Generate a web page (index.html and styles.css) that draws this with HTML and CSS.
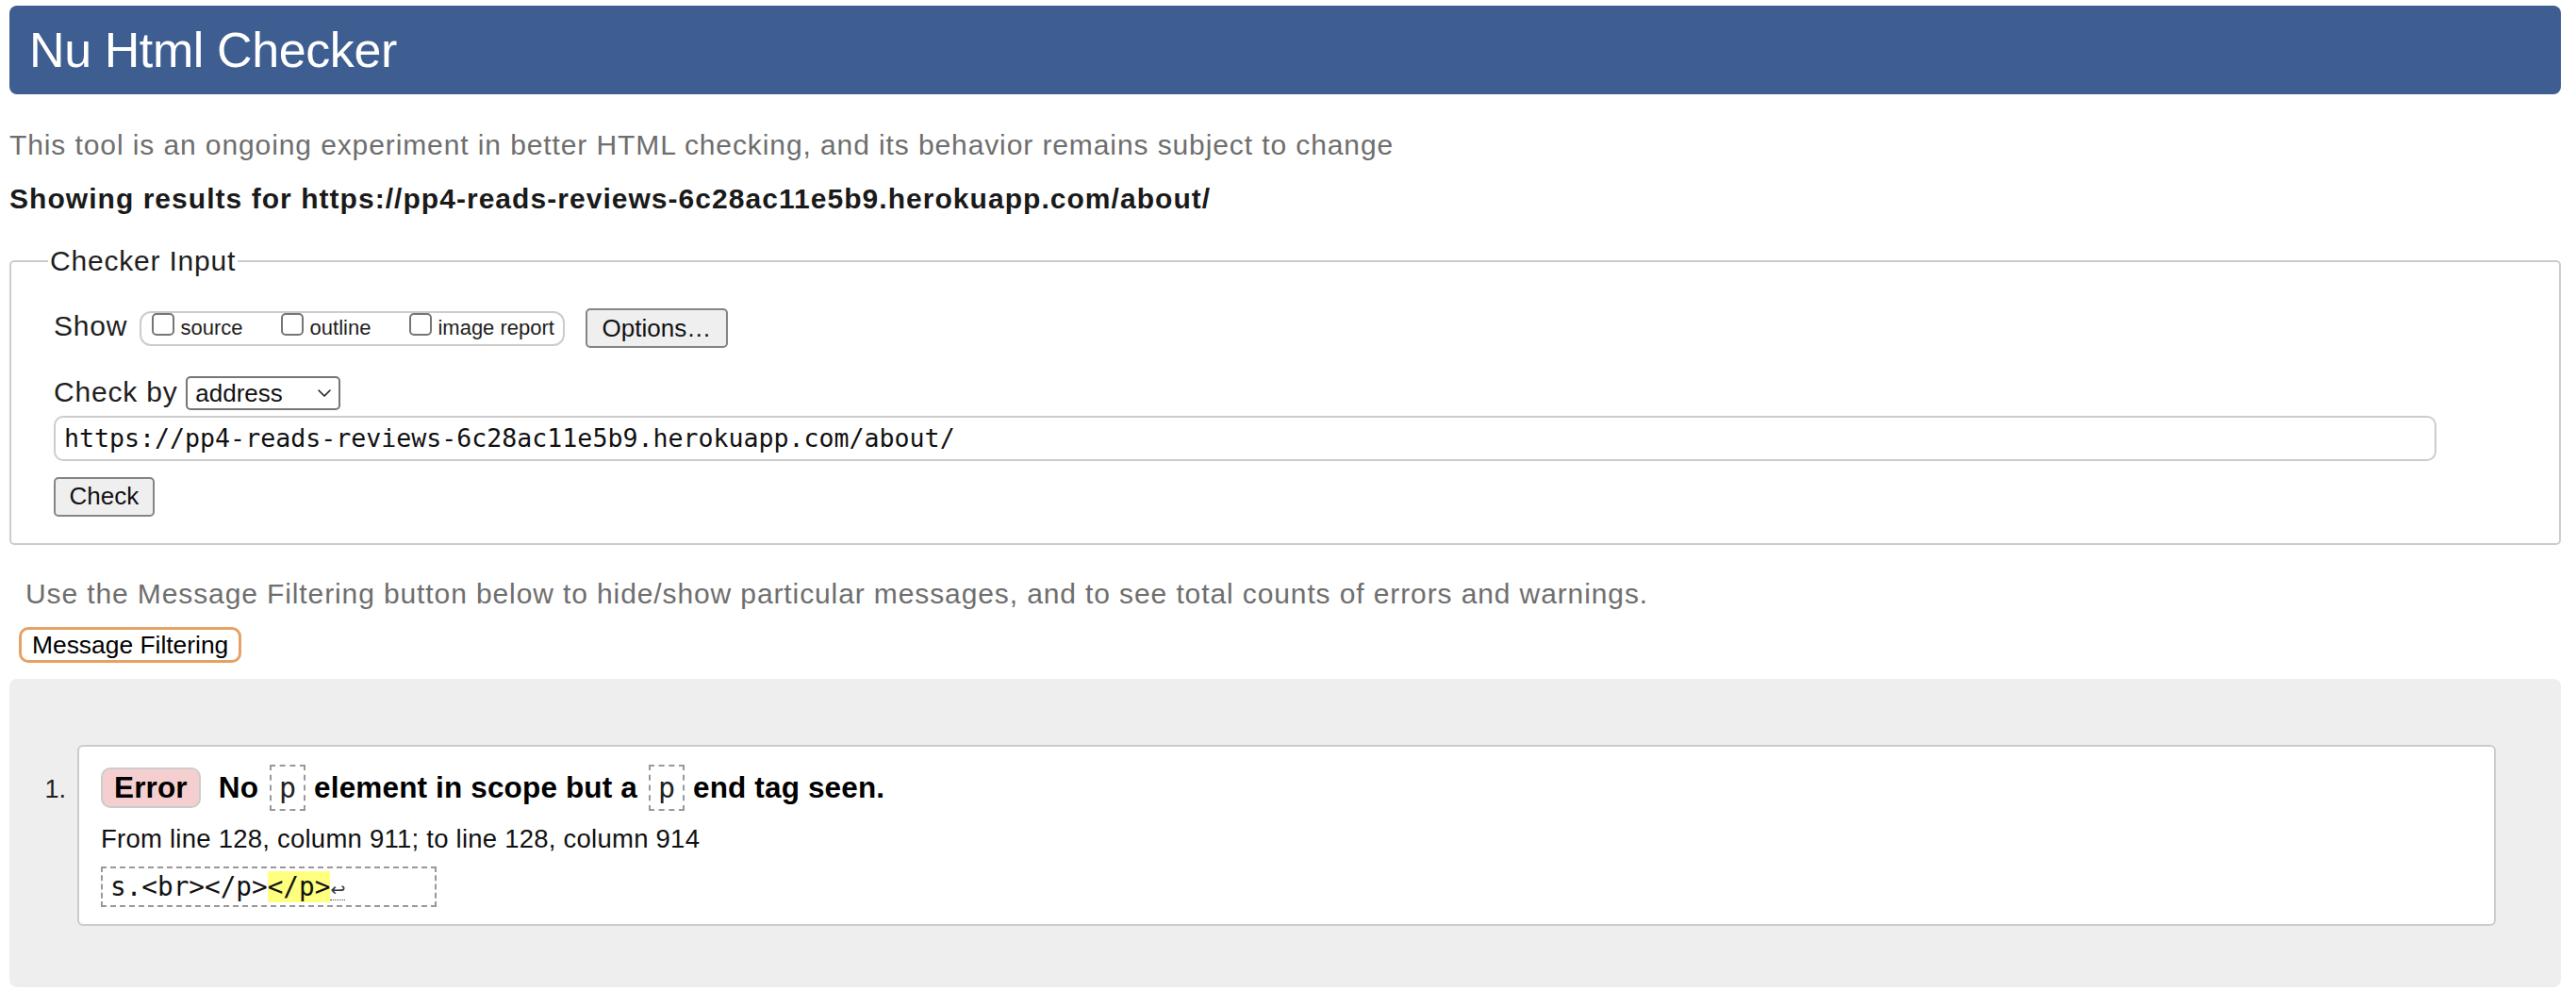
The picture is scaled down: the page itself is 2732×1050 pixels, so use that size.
FILE: index.html
```html
<!DOCTYPE html>
<html lang="en">
<head>
<meta charset="utf-8">
<title>Nu Html Checker</title>
<link rel="stylesheet" href="styles.css">
</head>
<body>
<header class="masthead"><h1 class="title">Nu Html Checker</h1></header>
<p class="intro">This tool is an ongoing experiment in better HTML checking, and its behavior remains subject to change</p>
<p class="results-for">Showing results for https://pp4-reads-reviews-6c28ac11e5b9.herokuapp.com/about/</p>
<form class="checker">
  <fieldset class="checker-input">
    <legend class="legend">Checker Input</legend>
    <div class="row row-show">
      <span class="label label-show">Show</span>
      <div class="show-group">
        <label class="opt"><input type="checkbox" class="cb"><span class="opt-text">source</span></label>
        <label class="opt"><input type="checkbox" class="cb"><span class="opt-text">outline</span></label>
        <label class="opt"><input type="checkbox" class="cb"><span class="opt-text">image report</span></label>
      </div>
      <button type="button" class="btn btn-options">Options…</button>
    </div>
    <div class="row row-checkby">
      <span class="label label-checkby">Check by</span>
      <div class="select"><span class="select-value">address</span><svg class="chevron" width="14" height="8" viewBox="0 0 14 8"><polyline points="1,1 7,7 13,1" fill="none" stroke="#222" stroke-width="1.6" stroke-linecap="round" stroke-linejoin="round"/></svg></div>
    </div>
    <div class="url-field">https://pp4-reads-reviews-6c28ac11e5b9.herokuapp.com/about/</div>
    <div class="row row-check">
      <button type="button" class="btn btn-check">Check</button>
    </div>
  </fieldset>
</form>
<p class="filter-note">Use the Message Filtering button below to hide/show particular messages, and to see total counts of errors and warnings.</p>
<button type="button" class="btn-filter">Message Filtering</button>
<section class="results">
  <ol class="messages">
    <li class="message-item">
      <span class="num">1.</span>
      <div class="card">
        <p class="msg-line"><span class="badge">Error</span>No <code class="tag">p</code> element in scope but a <code class="tag">p</code> end tag seen.</p>
        <p class="location">From line 128, column 911; to line 128, column 914</p>
        <div class="extract"><code class="extract-code">s.&lt;br&gt;&lt;/p&gt;<mark class="hl">&lt;/p&gt;</mark><span class="lf">↩</span></code></div>
      </div>
    </li>
  </ol>
</section>
</body>
</html>
```
FILE: styles.css
```css
* { box-sizing: border-box; }

html, body { margin: 0; }

body {
  background: #fff;
  color: #222;
  font-family: "Liberation Sans", Arial, Helvetica, sans-serif;
  padding: 6px 16px 0 10px;
}

.masthead {
  height: 94px;
  background: #3e5e92;
  border-radius: 8px;
  display: flex;
  align-items: center;
  padding-left: 21px;
}

.title {
  margin: 0;
  color: #fff;
  font-size: 52px;
  font-weight: normal;
  letter-spacing: -0.4px;
  line-height: 60px;
}

.intro {
  margin: 36.6px 0 0;
  font-size: 30px;
  line-height: 34px;
  letter-spacing: 0.9px;
  color: #6e6e6e;
}

.results-for {
  margin: 23.7px 0 0;
  font-size: 30px;
  line-height: 34px;
  letter-spacing: 1.04px;
  font-weight: bold;
  color: #1a1a1a;
}

.checker { margin: 0; }

.checker-input {
  margin: 31.3px 0 0;
  min-width: 0;
  border: 2px solid #ccc;
  border-radius: 5px;
  padding: 0 130px 28px 45px;
}

.legend {
  font-size: 30px;
  line-height: 34px;
  letter-spacing: 0.8px;
  padding: 0 2px;
  margin-left: -6px;
  color: #1e1e1e;
}

.row { display: flex; }

.label {
  font-size: 30px;
  line-height: 34px;
  letter-spacing: 0.8px;
  color: #1e1e1e;
}

.row-show {
  align-items: center;
  height: 42px;
  margin-top: 33.7px;
}

.label-show {
  margin-right: 12.3px;
  margin-bottom: 4px;
}

.show-group {
  display: flex;
  align-items: flex-start;
  height: 37px;
  border: 2px solid #ccc;
  border-radius: 12px;
  padding: 0 9.5px 0 11.5px;
  gap: 40.5px;
  margin-right: 21.6px;
}

.opt {
  display: flex;
  align-items: flex-start;
  gap: 6.5px;
}

.cb {
  -webkit-appearance: none;
  appearance: none;
  width: 24px;
  height: 24px;
  margin: 0;
  border: 2px solid #767676;
  border-radius: 5px;
  background: #fff;
}

.opt-text {
  font-size: 22px;
  line-height: 24px;
  padding-top: 4px;
  color: #1e1e1e;
}

.btn {
  font-family: "Liberation Sans", Arial, Helvetica, sans-serif;
  font-size: 26px;
  color: #111;
  background: #efefef;
  border: 2px solid #858585;
  border-radius: 5px;
  height: 42px;
  margin: 0;
}

.btn-options { padding: 0 15.5px; }

.row-checkby {
  align-items: baseline;
  margin-top: 29.5px;
}

.label-checkby { margin-right: 8.8px; }

.select {
  display: inline-flex;
  align-items: center;
  justify-content: space-between;
  width: 163.5px;
  height: 36px;
  border: 2px solid #767676;
  border-radius: 5px;
  padding: 0 8px;
  font-size: 26px;
  line-height: 30px;
  color: #111;
  background: #fff;
}

.chevron { display: block; }

.url-field {
  margin-top: 6px;
  height: 48px;
  border: 2px solid #ccc;
  border-radius: 10px;
  padding: 0 9px;
  display: flex;
  align-items: center;
  font-family: "DejaVu Sans Mono", Menlo, monospace;
  font-size: 26.6px;
  color: #111;
  white-space: nowrap;
}

.row-check { margin-top: 17px; }

.btn-check { padding: 0 14.6px; }

.filter-note {
  margin: 35.3px 0 0 17px;
  font-size: 30px;
  line-height: 34px;
  letter-spacing: 0.89px;
  color: #6e6e6e;
}

.btn-filter {
  display: block;
  margin: 18.4px 0 0 10px;
  height: 37.6px;
  padding: 0 11px;
  border: 3px solid #e6a264;
  border-radius: 10px;
  background: #fff;
  font-family: "Liberation Sans", Arial, Helvetica, sans-serif;
  font-size: 26.4px;
  color: #000;
}

.results {
  margin-top: 16.7px;
  background: #eee;
  border-radius: 8px;
  padding: 70px 69px 65px 37.6px;
}

.messages {
  list-style: none;
  margin: 0;
  padding: 0;
}

.message-item {
  display: flex;
  align-items: baseline;
}

.num {
  flex: none;
  width: 34.4px;
  font-size: 27px;
  color: #1e1e1e;
}

.card {
  flex: 1;
  background: #fff;
  border: 2px solid #ccc;
  border-radius: 6px;
  padding: 18.8px 20px 17.7px 23px;
}

.msg-line {
  margin: 0;
  font-weight: bold;
  font-size: 31.5px;
  line-height: 36px;
  letter-spacing: 0.15px;
  color: #000;
}

.badge {
  display: inline-block;
  background: #f5cfcf;
  border: 2px solid #ccc;
  border-radius: 10px;
  padding: 0 12px;
  line-height: 39px;
  margin-right: 19px;
}

.tag {
  display: inline-block;
  font-family: "DejaVu Sans Mono", Menlo, monospace;
  font-weight: normal;
  font-size: 30px;
  line-height: 45px;
  padding: 0 8px;
  border: 2px dashed #999;
  margin-left: 3px;
  color: #222;
}

.location {
  margin: 13.4px 0 0;
  font-size: 27.5px;
  line-height: 34px;
  letter-spacing: 0.24px;
  color: #111;
}

.extract {
  margin-top: 11.8px;
  width: 356.5px;
  height: 43.3px;
  border: 2px dashed #999;
  padding: 3px 8px;
  font-family: "DejaVu Sans Mono", Menlo, monospace;
  font-size: 27.7px;
  line-height: 33px;
  color: #111;
  white-space: nowrap;
}

.extract-code { font-family: inherit; font-size: inherit; }

.hl {
  background: #ffff80;
  color: inherit;
}

.lf {
  font-family: "DejaVu Sans", sans-serif;
  font-size: 19px;
  color: #333;
  border-bottom: 1px dotted #444;
}
```
